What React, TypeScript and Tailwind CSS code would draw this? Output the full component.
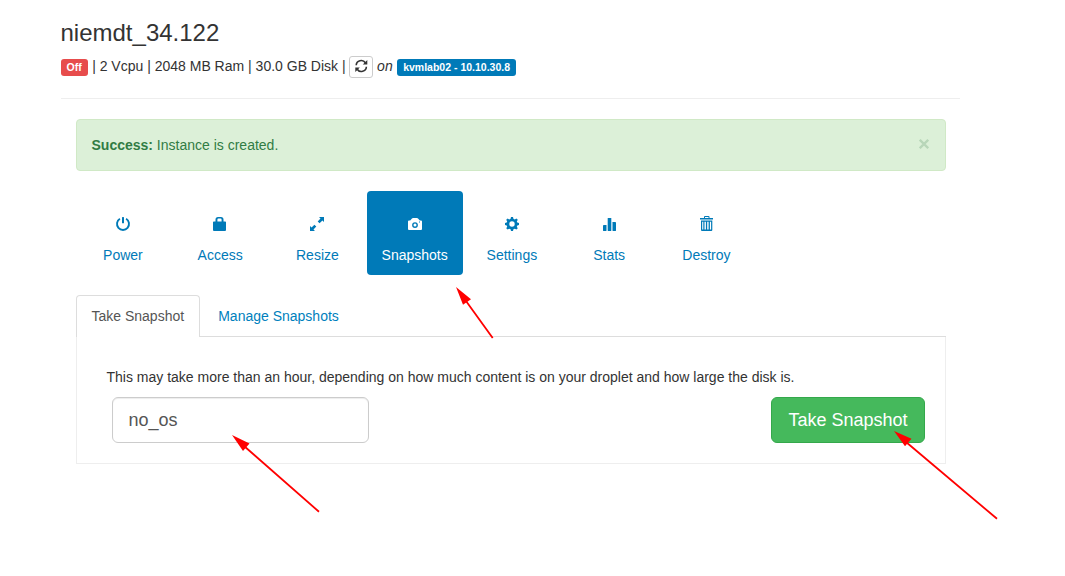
import type { ReactNode } from "react";

function Glyph({ children }: { children: ReactNode }) {
  return (
    <svg width="16" height="16" viewBox="0 0 16 16" fill="currentColor" aria-hidden="true">
      {children}
    </svg>
  );
}

const actions: { label: string; icon: ReactNode }[] = [
  {
    label: "Power",
    icon: (
      <>
        <path d="M4.9 2.8A6 6 0 1 0 11.1 2.8" fill="none" stroke="currentColor" strokeWidth="1.9" />
        <rect x="7" y="1" width="2" height="6.3" rx="0.5" />
      </>
    ),
  },
  {
    label: "Access",
    icon: (
      <path
        fillRule="evenodd"
        d="M1 6.3Q1 5.5 1.8 5.5H3.5V3.5Q3.5 1 6 1H9Q11.5 1 11.5 3.5V5.5H13.2Q14 5.5 14 6.3V14Q14 15 13 15H2Q1 15 1 14ZM5.4 5.5H9.6V3.8Q9.6 2.6 8.6 2.6H6.4Q5.4 2.6 5.4 3.8Z"
      />
    ),
  },
  {
    label: "Resize",
    icon: (
      <path d="M15 1V6L13.4 4.5L10.6 7.3L8.7 5.4L11.5 2.6L10 1ZM1 15V10L2.6 11.5L5.4 8.7L7.3 10.6L4.5 13.4L6 15Z" />
    ),
  },
  {
    label: "Snapshots",
    icon: (
      <path
        fillRule="evenodd"
        d="M1 5.4Q1 4.4 2 4.4H3.2L5 2.6Q5.4 2.1 6 2.1H10Q10.6 2.1 11 2.6L12.8 4.4H14Q15 4.4 15 5.4V13Q15 14 14 14H2Q1 14 1 13ZM8 6.2A2.9 2.9 0 1 0 8 12A2.9 2.9 0 1 0 8 6.2ZM8 7.6A1.5 1.5 0 1 1 8 10.6A1.5 1.5 0 1 1 8 7.6ZM12 5.6V6.6H13V5.6Z"
      />
    ),
  },
  {
    label: "Settings",
    icon: (
      <path
        fillRule="evenodd"
        d="M7 1H9L9.4 2.8L10.8 3.4L12.4 2.4L13.8 3.8L12.8 5.4L13.3 6.6L15 7V9L13.3 9.4L12.8 10.7L13.8 12.2L12.4 13.6L10.8 12.7L9.4 13.3L9 15H7L6.6 13.3L5.2 12.7L3.6 13.6L2.2 12.2L3.2 10.7L2.7 9.4L1 9V7L2.7 6.6L3.2 5.4L2.2 3.8L3.6 2.4L5.2 3.4L6.6 2.8ZM8 5.3A2.7 2.7 0 1 0 8 10.7A2.7 2.7 0 1 0 8 5.3Z"
      />
    ),
  },
  {
    label: "Stats",
    icon: (
      <>
        <rect x="2" y="9" width="3.5" height="6" rx="0.4" />
        <rect x="6.7" y="2" width="3.6" height="13" rx="0.4" />
        <rect x="11.5" y="6" width="3.5" height="9" rx="0.4" />
      </>
    ),
  },
  {
    label: "Destroy",
    icon: (
      <path
        fillRule="evenodd"
        d="M2 2H6V1Q6 0 7 0H10.5Q11.5 0 11.5 1V2H15V3.4H2ZM7 2H10.5V1H7ZM3 4.5H14.3V14Q14.3 15 13.3 15H4Q3 15 3 14ZM4.2 5.8V13.6H5.3V5.8ZM6.5 5.8V13.6H7.9V5.8ZM9.2 5.8V13.6H10.6V5.8ZM11.9 5.8V13.6H13.1V5.8Z"
      />
    ),
  },
];

function Header() {
  return (
    <header className="h-[99px] border-b border-[#eeeeee] pt-5">
      <h1 className="text-2xl leading-[26px]">niemdt_34.122</h1>
      <div className="mt-[10px] flex h-[22px] items-center whitespace-pre">
        <span className="mt-px h-[17px] rounded-[3px] bg-[#e74c4c] px-[6px] text-[10.5px] leading-[17px] font-bold text-white">Off</span>
        <span className="-mt-[2px] ml-[4.5px]">| 2 Vcpu | 2048 MB Ram | 30.0 GB Disk |</span>
        <button className="ml-[3px] grid h-[22px] w-6 shrink-0 place-items-center rounded-[3px] border border-[#cccccc] pb-[2px] pl-px" aria-label="Refresh">
          <svg width="14" height="14" viewBox="0 0 14 14" fill="none" stroke="currentColor" strokeWidth="1.6">
            <path d="M2.2 6.2A5 5 0 0 1 11.4 3.8M12.4 7.8A5 5 0 0 1 3.2 10.2" />
            <path d="M13.3 1V5.5H8.8ZM1.3 13V8.5H5.8Z" fill="currentColor" stroke="none" />
          </svg>
        </button>
        <em className="-mt-[2px] ml-[4.5px]">on</em>
        <span className="mt-px ml-[4.5px] h-[17px] rounded-[3px] bg-[#007ab8] px-[6px] text-[10.5px] leading-[17px] font-bold text-white">kvmlab02 - 10.10.30.8</span>
      </div>
    </header>
  );
}

function SuccessAlert() {
  return (
    <div className="mt-5 flex h-[52px] items-center justify-between rounded border border-[#d0e9c6] bg-[#dcf0d8] pr-[14px] pl-[15px] text-[#317c44]">
      <p><strong>Success:</strong> Instance is created.</p>
      <button className="mb-[2px] grid size-[14px] place-items-center text-[#b8d6b9]" aria-label="Close">
        <svg width="10" height="10" viewBox="0 0 10 10" stroke="currentColor" strokeWidth="2.3">
          <path d="M0.8 0.8L9.2 9.2M9.2 0.8L0.8 9.2" />
        </svg>
      </button>
    </div>
  );
}

function ActionNav() {
  return (
    <nav className="mt-5 -ml-[0.6px] flex gap-[1.25px]">
      {actions.map(({ label, icon }) => (
        <a
          key={label}
          className={
            label === "Snapshots"
              ? "flex h-[84px] w-24 flex-col items-center rounded bg-[#007ab8] pt-[25px] text-white"
              : "flex h-[84px] w-24 flex-col items-center rounded pt-[25px] text-[#007ab8]"
          }
        >
          <Glyph>{icon}</Glyph>
          <span className="mt-[13px]">{label}</span>
        </a>
      ))}
    </nav>
  );
}

function SnapshotPanel() {
  return (
    <section className="mt-5">
      <div className="flex h-[42px] border-b border-[#dddddd]">
        <a className="h-[42px] w-[124px] rounded-t border border-b-0 border-[#dddddd] bg-white pt-[10px] pl-[15px] text-[#555555]">Take Snapshot</a>
        <a className="pt-[11px] pl-[18.7px] text-[#007fbd]">Manage Snapshots</a>
      </div>
      <div className="h-[127px] border border-t-0 border-[#eeeeee] pt-[30px] pr-5">
        <p className="pl-[30px]">This may take more than an hour, depending on how much content is on your droplet and how large the disk is.</p>
        <div className="mt-[10px] flex justify-between pl-[35px]">
          <input
            className="h-[46px] w-[257px] rounded-md border border-[#cccccc] bg-white px-4 text-lg text-[#555555] shadow-[inset_0_1px_1px_rgba(0,0,0,0.075)] outline-none"
            defaultValue="no_os"
            aria-label="Snapshot name"
          />
          <button className="h-[46px] w-[154px] rounded-md border border-[#34a84b] bg-[#45b95c] pl-px text-lg text-white">Take Snapshot</button>
        </div>
      </div>
    </section>
  );
}

function Arrows() {
  return (
    <svg className="pointer-events-none absolute top-0 left-0" width="1065" height="576" viewBox="0 0 1065 576" stroke="#ff0000" strokeWidth="1.8" fill="#ff0000">
      <path d="M466 301L492.7 338M244 446L319 511.8M906 442L997 518.8" />
      <path d="M456 287L471 299.3L463 304.8ZM232 435L249.5 443.5L243 451ZM894 431L911.5 438.8L905 446.3Z" stroke="none" />
    </svg>
  );
}

export default function App() {
  return (
    <div className="relative h-[576px] w-[1065px] overflow-hidden bg-white pl-[60.5px] font-['Liberation_Sans',Arial,sans-serif] text-sm leading-5 text-[#333333]">
      <main className="w-[899px]">
        <Header />
        <div className="ml-[15px] w-[870px]">
          <SuccessAlert />
          <ActionNav />
          <SnapshotPanel />
        </div>
      </main>
      <Arrows />
    </div>
  );
}
